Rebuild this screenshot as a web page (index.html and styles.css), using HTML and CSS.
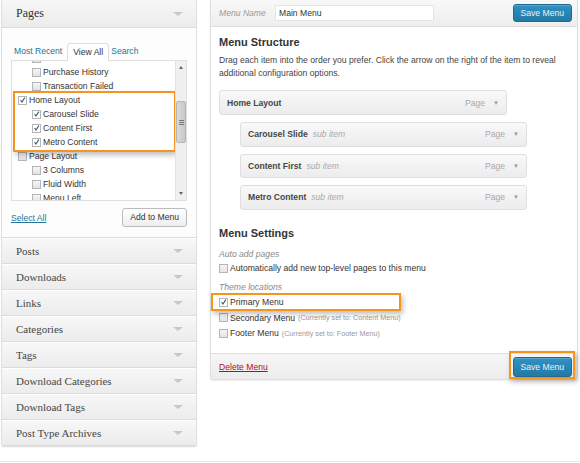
FILE: index.html
```html
<!DOCTYPE html>
<html>
<head>
<meta charset="utf-8">
<link rel="stylesheet" href="styles.css">
</head>
<body>
<div class="page">
  <div class="cols">
    <aside class="left">
      <div class="acc-head first">
        <span class="acc-title">Pages</span>
        <span class="tri"></span>
      </div>
      <div class="acc-body">
        <div class="tabs">
          <span class="tab">Most Recent</span>
          <span class="tab active">View All</span>
          <span class="tab">Search</span>
        </div>
        <div class="listbox">
          <div class="listclip">
            <ul class="plist">
              <li class="child"><span class="cb"></span>Purchase Confirmation</li>
              <li class="child"><span class="cb"></span>Purchase History</li>
              <li class="child"><span class="cb"></span>Transaction Failed</li>
              <li class="top"><span class="cb on"><svg viewBox="0 0 9 9"><path d="M2 4.5 L3.8 7 L7.5 1.5" fill="none" stroke="#3b5a78" stroke-width="1.4"/></svg></span>Home Layout</li>
              <li class="child"><span class="cb on"><svg viewBox="0 0 9 9"><path d="M2 4.5 L3.8 7 L7.5 1.5" fill="none" stroke="#3b5a78" stroke-width="1.4"/></svg></span>Carousel Slide</li>
              <li class="child"><span class="cb on"><svg viewBox="0 0 9 9"><path d="M2 4.5 L3.8 7 L7.5 1.5" fill="none" stroke="#3b5a78" stroke-width="1.4"/></svg></span>Content First</li>
              <li class="child"><span class="cb on"><svg viewBox="0 0 9 9"><path d="M2 4.5 L3.8 7 L7.5 1.5" fill="none" stroke="#3b5a78" stroke-width="1.4"/></svg></span>Metro Content</li>
              <li class="top"><span class="cb"></span>Page Layout</li>
              <li class="child"><span class="cb"></span>3 Columns</li>
              <li class="child"><span class="cb"></span>Fluid Width</li>
              <li class="child"><span class="cb"></span>Menu Left</li>
            </ul>
            <div class="hl hl-left"></div>
          </div>
          <div class="sbar">
            <span class="sarrow up"></span>
            <div class="strack"><div class="thumb"><i></i><i></i><i></i></div></div>
            <span class="sarrow down"></span>
          </div>
        </div>
        <div class="actions">
          <a class="selall">Select All</a>
          <span class="btn">Add to Menu</span>
        </div>
      </div>
      <div class="acc-head"><span class="acc-title">Posts</span><span class="tri"></span></div>
      <div class="acc-head"><span class="acc-title">Downloads</span><span class="tri"></span></div>
      <div class="acc-head"><span class="acc-title">Links</span><span class="tri"></span></div>
      <div class="acc-head"><span class="acc-title">Categories</span><span class="tri"></span></div>
      <div class="acc-head"><span class="acc-title">Tags</span><span class="tri"></span></div>
      <div class="acc-head"><span class="acc-title">Download Categories</span><span class="tri"></span></div>
      <div class="acc-head"><span class="acc-title">Download Tags</span><span class="tri"></span></div>
      <div class="acc-head"><span class="acc-title">Post Type Archives</span><span class="tri"></span></div>
    </aside>

    <section class="right">
      <div class="mhead">
        <span class="mlabel">Menu Name</span>
        <span class="minput">Main Menu</span>
        <span class="bbtn">Save Menu</span>
      </div>
      <div class="mbody">
        <h3 class="mtitle">Menu Structure</h3>
        <p class="desc">Drag each item into the order you prefer. Click the arrow on the right of the item to reveal additional configuration options.</p>
        <div class="items">
          <div class="item"><b>Home Layout</b><span class="type">Page</span><span class="dn">▼</span></div>
          <div class="item sub"><b>Carousel Slide</b><em>sub item</em><span class="type">Page</span><span class="dn">▼</span></div>
          <div class="item sub"><b>Content First</b><em>sub item</em><span class="type">Page</span><span class="dn">▼</span></div>
          <div class="item sub"><b>Metro Content</b><em>sub item</em><span class="type">Page</span><span class="dn">▼</span></div>
        </div>
        <h3 class="mtitle settings">Menu Settings</h3>
        <div class="slabel first">Auto add pages</div>
        <div class="opt auto"><span class="cb"></span>Automatically add new top-level pages to this menu</div>
        <div class="slabel second">Theme locations</div>
        <div class="opts">
          <div class="opt"><span class="cb on"><svg viewBox="0 0 9 9"><path d="M2 4.5 L3.8 7 L7.5 1.5" fill="none" stroke="#3b5a78" stroke-width="1.4"/></svg></span>Primary Menu</div>
          <div class="opt"><span class="cb"></span>Secondary Menu <small>(Currently set to: Content Menu)</small></div>
          <div class="opt"><span class="cb"></span>Footer Menu <small>(Currently set to: Footer Menu)</small></div>
          <div class="hl hl-primary"></div>
        </div>
      </div>
      <div class="mfoot">
        <a class="del">Delete Menu</a>
        <span class="savewrap"><span class="bbtn">Save Menu</span><span class="hl hl-save"></span></span>
      </div>
    </section>
  </div>
  <div class="rule"></div>
</div>
</body>
</html>
```

FILE: styles.css
```css
* { box-sizing: border-box; margin: 0; padding: 0; }
body {
  margin: 0;
  background: #fff;
  font-family: "Liberation Sans", Arial, sans-serif;
  font-size: 9px;
  color: #333;
  width: 580px;
  height: 463px;
  overflow: hidden;
}
.page { width: 580px; height: 463px; display: flex; flex-direction: column; }
.cols { display: flex; align-items: flex-start; padding-left: 1px; gap: 13px; height: 461px; }
.rule { border-top: 1px solid #e6e6e6; }

/* LEFT */
.left {
  width: 196px;
  border: 1px solid #dfdfdf;
  border-top: none;
  border-radius: 0 0 3px 3px;
  background: #f7f7f7;
  box-shadow: 0 1px 1px rgba(0,0,0,.04);
}
.acc-head {
  height: 26px;
  display: flex;
  align-items: center;
  justify-content: space-between;
  padding: 0 13px 0 14px;
  background: linear-gradient(#f7f7f7, #ececec);
  border-top: 1px solid #fff;
  border-bottom: 1px solid #dcdcdc;
}
.acc-head.first { height: 28px; border-top: none; }
.acc-title {
  font-family: "Liberation Serif", Georgia, serif;
  font-size: 11px;
  color: #464646;
}
.first .acc-title { font-size: 12px; color: #333; }
.tri {
  width: 0; height: 0;
  border-left: 5px solid transparent;
  border-right: 5px solid transparent;
  border-top: 4px solid #c8c8c8;
}
.acc-body {
  background: #fdfdfd;
  padding: 14px 9px 10px 9px;
  border-bottom: 1px solid #dcdcdc;
}
.tabs { display: flex; align-items: flex-end; height: 18px; padding-left: 3px; }
.tab {
  color: #21759b;
  padding: 0 3px 3px 0;
  font-size: 8.6px;
  line-height: 12px;
}
.tab.active {
  color: #333;
  border: 1px solid #dfdfdf;
  border-bottom: none;
  background: #fff;
  padding: 2px 5px 3px 5px;
  margin: 0 2px 0 2px;
  border-radius: 3px 3px 0 0;
  position: relative;
  top: 1px;
}
.listbox {
  height: 141px;
  border: 1px solid #dfdfdf;
  background: #fff;
  display: flex;
}
.listclip { flex: 1; overflow: hidden; position: relative; }
.plist { list-style: none; margin-top: -10px; }
.plist li {
  height: 14px;
  display: flex;
  align-items: center;
  font-size: 8.6px;
  color: #333;
  white-space: nowrap;
}
.plist li.top { padding-left: 6px; }
.plist li.child { padding-left: 20px; }
.cb {
  width: 9px; height: 9px;
  border: 1px solid #b5b5b5;
  background: linear-gradient(#f5f5f5, #e4e4e4);
  margin-right: 2px;
  display: inline-flex;
  flex: none;
}
.cb svg { width: 8px; height: 8px; display: block; margin: -0.5px 0 0 0; }
.cb.on { background: #fff; }
.sbar {
  width: 11px;
  background: #f0f0f0;
  border-left: 1px solid #e2e2e2;
  display: flex;
  flex-direction: column;
  align-items: center;
}
.sarrow { width: 0; height: 0; border-left: 2.5px solid transparent; border-right: 2.5px solid transparent; margin: 5px 0; }
.sarrow.up { border-bottom: 3px solid #666; }
.sarrow.down { border-top: 3px solid #666; }
.strack { flex: 1; width: 100%; padding-top: 27px; }
.thumb {
  height: 42px;
  width: 10px;
  background: linear-gradient(90deg, #d9d9d9, #c8c8c8);
  border: 1px solid #b5b5b5;
  border-radius: 2px;
  display: flex; flex-direction: column; justify-content: center; align-items: center; gap: 1px;
}
.thumb i { display: block; width: 5px; height: 1px; background: #777; }
.actions {
  display: flex;
  justify-content: space-between;
  align-items: center;
  margin-top: 7px;
}
.selall { color: #21759b; text-decoration: underline; font-size: 8.6px; }
.btn {
  border: 1px solid #bbb;
  border-radius: 3px;
  background: linear-gradient(#fff, #eee);
  padding: 0 7px;
  height: 19px;
  line-height: 17px;
  font-size: 8.6px;
  color: #333;
}
.hl {
  position: absolute;
  border: 2px solid #f7941d;
  box-shadow: 2px 3px 5px rgba(0,0,0,.25);
  pointer-events: none;
}
.hl-left { left: 1px; top: 30px; width: 163px; height: 61px; }

/* RIGHT */
.right {
  width: 368px;
  border: 1px solid #dfdfdf;
  border-top: none;
  border-radius: 0 0 3px 3px;
  background: #fff;
  box-shadow: 0 1px 2px rgba(0,0,0,.08);
}
.mhead {
  height: 27px;
  display: flex;
  align-items: center;
  padding: 0 5px 0 8px;
  background: linear-gradient(#f8f8f8, #eeeeee);
  border-bottom: 1px solid #dfdfdf;
}
.mlabel { font-style: italic; color: #999; font-size: 8.6px; width: 56px; }
.minput {
  width: 159px; height: 16px;
  border: 1px solid #e5e5e5;
  background: #fff;
  padding-left: 3px;
  line-height: 14px;
  font-size: 8.6px;
  color: #333;
}
.bbtn {
  margin-left: auto;
  height: 18px;
  padding: 0 7px;
  line-height: 16px;
  border: 1px solid #1f6a8f;
  border-radius: 3px;
  background: linear-gradient(#2f92c4, #2479a5);
  color: #e8f3f9;
  font-size: 8.6px;
  box-shadow: inset 0 1px 0 rgba(255,255,255,.2);
}
.mbody { padding: 9px 8px 12px 8px; }
.mtitle { font-size: 11px; font-weight: bold; color: #333; line-height: 13px; }
.desc { margin-top: 5px; font-size: 8.6px; line-height: 13px; color: #444; }
.items { margin-top: 10px; display: flex; flex-direction: column; gap: 7px; }
.item {
  width: 288px;
  height: 25px;
  border: 1px solid #dfdfdf;
  border-radius: 3px;
  background: linear-gradient(#f9f9f9, #ececec);
  display: flex;
  align-items: center;
  padding: 0 7px;
  font-size: 8.6px;
}
.item b { color: #464646; }
.item em { color: #aaa; margin-left: 5px; }
.item .type { margin-left: auto; color: #aaa; }
.item .dn { color: #999; font-size: 6px; margin-left: 8px; }
.item.sub { margin-left: 21px; width: 287px; height: 24.5px; }
.mtitle.settings { margin-top: 17px; }
.slabel { font-style: italic; color: #888; font-size: 8.6px; line-height: 13px; }
.slabel.first { margin-top: 8px; }
.slabel.second { margin-top: 5px; }
.opt { display: flex; align-items: center; height: 15.5px; font-size: 8.6px; color: #333; white-space: nowrap; }
.opt.auto { height: 15px; }
.opt .cb { margin-right: 2px; }
.opt small { color: #999; font-size: 7.2px; margin-left: 3px; }
.opts { position: relative; margin-top: 1px; }
.hl-primary { left: -8px; top: -2px; width: 190px; height: 18px; }
.mfoot {
  height: 26px;
  border-top: 1px solid #dfdfdf;
  background: linear-gradient(#f6f6f6, #ececec);
  display: flex;
  align-items: center;
  padding: 0 5px 0 8px;
}
.del { color: #bc0b0b; text-decoration: underline; font-size: 8.6px; }
.savewrap { margin-left: auto; position: relative; display: flex; margin-top: 1px; }
.savewrap .bbtn { height: 20px; line-height: 18px; }
.hl-save { left: -4px; top: -6px; width: 66px; height: 28px; }
```
